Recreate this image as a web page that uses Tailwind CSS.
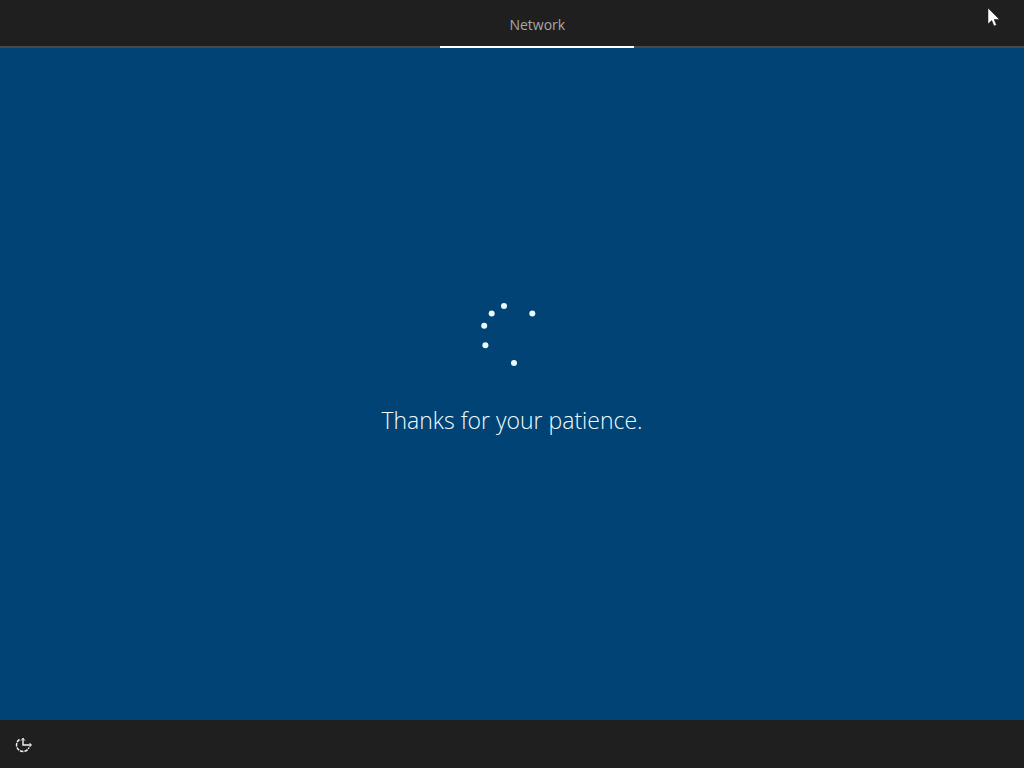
<!DOCTYPE html>
<html lang="en">
<head>
  <meta charset="UTF-8" />
  <meta name="viewport" content="width=device-width, initial-scale=1" />
  <title>Setup - Network</title>
  <script src="https://cdn.jsdelivr.net/npm/@tailwindcss/browser@4"></script>
</head>
<body class="flex min-h-screen flex-col bg-[#004374] font-['Open_Sans','Noto_Sans',sans-serif] text-white">
  <header class="flex h-12 bg-[#1f1f1f] pl-[43%]">
    <nav class="relative flex w-full before:absolute before:right-0 before:bottom-0 before:h-0.5 before:w-screen before:bg-[#484848]">
      <a href="#" aria-current="step" class="relative flex w-[194px] items-center justify-center border-b-2 border-white pt-1 text-sm text-[#a8a8a8]">Network</a>
    </nav>
  </header>

  <main class="flex flex-1 flex-col items-center justify-center gap-[38px] pb-[30px]">
    <!-- progress ring -->
    <svg role="img" aria-label="Loading" class="size-16" viewBox="0 0 64 64" fill="#e9fbff">
      <circle cx="24" cy="4" r="3" />
      <circle cx="11.7" cy="11.4" r="3" />
      <circle cx="4.2" cy="23.8" r="3" />
      <circle cx="5.4" cy="43.2" r="3" />
      <circle cx="34" cy="61" r="3" />
      <circle cx="52.3" cy="11.4" r="3" />
    </svg>
    <h1 class="text-[23px] leading-8 font-light text-[#f0fcff]">Thanks for your patience.</h1>
  </main>

  <footer class="flex h-12 items-center bg-[#1f1f1f] px-4">
    <button type="button" aria-label="Ease of access" class="size-4">
      <svg class="size-4 overflow-visible" viewBox="1 -1 16 16" fill="none" stroke="#f2f2f2">
        <path d="M8 1v7H16" stroke-width="1.4" />
        <path d="M6 3.500l2-2L10 3.500M14.500 6l2 2L14.500 10" stroke-width="1" />
        <path d="M4.500 2.500A6.500 6.500 0 1 0 14 10.500" stroke-width="1.5" stroke-dasharray="3.500 1" />
      </svg>
    </button>
  </footer>

  <!-- mouse pointer -->
  <svg class="pointer-events-none absolute top-2 right-6 h-5 w-3" viewBox="0 0 12 20" aria-hidden="true">
    <path d="M0 0v16l3.700-3.500L6 18l2.500-1L6.200 11.500H11.500z" fill="#fff" stroke="#111" stroke-width=".5" />
  </svg>
</body>
</html>
